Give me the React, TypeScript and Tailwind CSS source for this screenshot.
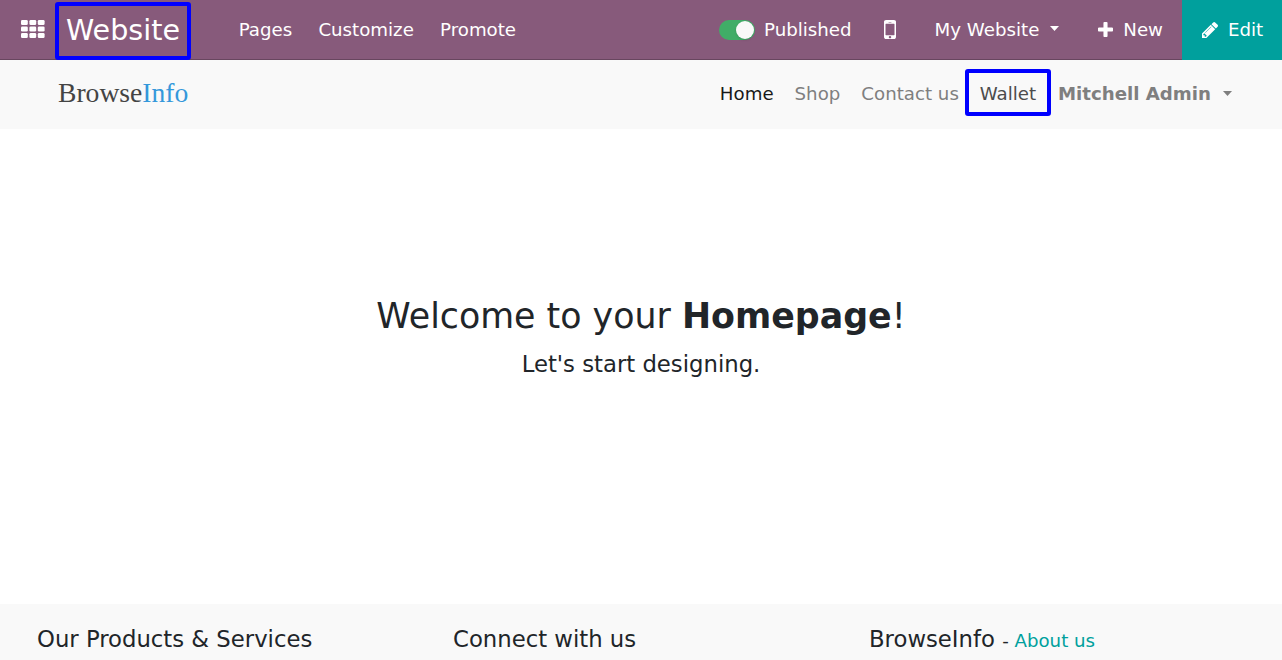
import React from "react";

function GridIcon() {
  return (
    <svg className="h-[18px] w-6" viewBox="0 0 24 18" fill="white">
      {[0, 6.5, 13].map((y) =>
        [0, 8.4, 16.8].map((x) => <rect key={`${x}-${y}`} x={x} y={y} width="6.8" height="5" rx="1.3" />)
      )}
    </svg>
  );
}

function Caret({ className }: { className: string }) {
  return (
    <svg className={`h-[5px] w-[9px] shrink-0 ${className}`} viewBox="0 0 10 5" preserveAspectRatio="none" fill="currentColor">
      <path d="M0 0h10L5 5z" />
    </svg>
  );
}

const mobilePath =
  "M976 1408q0-33-23.5-56.5t-56.5-23.5-56.5 23.5-23.5 56.5 23.5 56.5 56.5 23.5 56.5-23.5 23.5-56.5zm208-160v-704q0-13-9.5-22.5t-22.5-9.5h-512q-13 0-22.5 9.5t-9.5 22.5v704q0 13 9.5 22.5t22.5 9.5h512q13 0 22.5-9.5t9.5-22.5zm-192-848q0-16-16-16h-160q-16 0-16 16t16 16h160q16 0 16-16zm288-16v1024q0 52-38 90t-90 38h-512q-52 0-90-38t-38-90v-1024q0-52 38-90t90-38h512q52 0 90 38t38 90z";
const plusPath =
  "M1600 736v192q0 40-28 68t-68 28h-416v416q0 40-28 68t-68 28h-192q-40 0-68-28t-28-68v-416h-416q-40 0-68-28t-28-68v-192q0-40 28-68t68-28h416v-416q0-40 28-68t68-28h192q40 0 68 28t28 68v416h416q40 0 68 28t28 68z";
const pencilPath =
  "M491 1536l91-91-235-235-91 91v107h128v128h107zm523-928q0-22-22-22-10 0-17 7l-542 542q-7 7-7 17 0 22 22 22 10 0 17-7l542-542q7-7 7-17zm-54-192l416 416-832 832h-416v-416zm683 96q0 53-37 90l-166 166-416-416 166-165q36-38 90-38 53 0 91 38l235 234q37 39 37 91z";

function TopBar() {
  return (
    <header className="flex h-[60px] bg-[#875a7b] text-white">
      <div className="flex min-w-0 flex-1 items-center border-b border-[#68465f]">
        <div className="mb-px ml-[20.6px] w-[34.4px] shrink-0"><GridIcon /></div>
        <div className="mt-[3px] flex h-[58px] w-[136px] shrink-0 items-center justify-center rounded-[3px] border-4 border-[#0000ff] pb-px text-[28.6px]">
          Website
        </div>
        <nav className="ml-[47.7px] flex gap-[26.2px]">
          <span>Pages</span>
          <span>Customize</span>
          <span>Promote</span>
        </nav>
        <div className="ml-auto flex items-center">
          <span className="mt-px flex h-5 w-9 items-center justify-end rounded-full bg-[#40ad67] pr-px">
            <span className="size-[18px] rounded-full bg-[#f9f9f9] shadow-sm" />
          </span>
          <span className="ml-[9px]">Published</span>
          <svg className="ml-8 h-[19px] w-3" viewBox="512 256 768 1280" preserveAspectRatio="none" fill="currentColor"><path d={mobilePath} /></svg>
          <span className="ml-[39px]">My Website</span>
          <Caret className="mb-0.5 ml-[11px]" />
          <svg className="mb-px ml-[39px] size-[15px]" viewBox="192 128 1408 1408" fill="currentColor"><path d={plusPath} /></svg>
          <span className="mr-[19px] ml-[10px]">New</span>
        </div>
      </div>
      <div className="flex w-[100px] items-center bg-[#00a09d] pb-px pl-5">
        <svg className="size-4" viewBox="128 149 1515 1515" fill="currentColor"><path d={pencilPath} /></svg>
        <span className="ml-2.5">Edit</span>
      </div>
    </header>
  );
}

function SiteNav() {
  return (
    <div className="flex h-[69px] items-center bg-[#f9f9f9] pb-0.5 text-[#7f7f7f]">
      <div className="mb-[3px] ml-[58px] font-['Liberation_Serif',serif] text-[27.6px] text-[#444]">
        Browse<span className="text-[#3498db]">Info</span>
      </div>
      <nav className="ml-auto flex items-center">
        <span className="text-[#191919]">Home</span>
        <span className="ml-[21px]">Shop</span>
        <span className="ml-[21px]">Contact us</span>
        <span className="-mt-0.5 ml-1.5 flex h-[47px] w-[86px] items-center justify-center rounded-[3px] border-4 border-[#0000ff] pt-0.5 text-[#4c4c4c]">Wallet</span>
        <span className="ml-[7px] font-bold">Mitchell Admin</span>
        <Caret className="mr-[50px] ml-[12px]" />
      </nav>
    </div>
  );
}

export default function App() {
  return (
    <div className="flex h-[660px] w-[1282px] flex-col overflow-hidden bg-white font-['DejaVu_Sans',sans-serif] text-[18.2px] leading-[27px] whitespace-nowrap text-[#212529]">
      <TopBar />
      <SiteNav />
      <main className="flex h-[475px] flex-col items-center pt-[166px]">
        <h1 className="text-[34.8px] leading-[42px]">Welcome to your <b>Homepage</b>!</h1>
        <p className="mt-3 text-[22.75px] leading-[30px]">Let's start designing.</p>
      </main>
      <footer className="flex flex-1 bg-[#f9f9f9] pt-5 pl-[37px] text-[22.75px] leading-[30px]">
        <h4 className="w-[416px]">Our Products &amp; Services</h4>
        <h4 className="w-[416px]">Connect with us</h4>
        <h4>BrowseInfo <span className="text-[18.2px]">- <a className="text-[#00a09d]">About us</a></span></h4>
      </footer>
    </div>
  );
}
